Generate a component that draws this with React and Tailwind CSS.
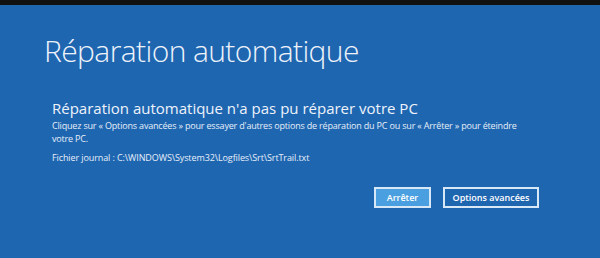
import React from 'react'

const App = () => {
  return (
    <div className="w-[600px] h-[258px] flex flex-col bg-[#1f66b1] overflow-hidden font-['Open_Sans',sans-serif] text-white">
      {/* top strip */}
      <div className="h-[5px] bg-[#111111] flex-shrink-0" />

      <div className="flex-1 flex flex-col">
        <h1 className="pl-[44px] pt-[26px] text-[30px] font-light leading-[40px] tracking-[-0.6px] text-[#eef3fa]">
          Réparation automatique
        </h1>

        <div className="pl-[52px] pt-[27px]">
          <h2 className="text-[15px] leading-[20px] text-[#eef3fa]">
            Réparation automatique n'a pas pu réparer votre PC
          </h2>
          <p className="mt-[1px] w-[480px] text-[9px] leading-[13px] tracking-[-0.18px] text-[#e6eef8]">
            Cliquez sur « Options avancées » pour essayer d'autres options de réparation du PC ou sur « Arrêter » pour éteindre votre PC.
          </p>
          <p className="mt-[6px] text-[9px] leading-[13px] tracking-[-0.1px] text-[#e6eef8]">
            Fichier journal : C:\WINDOWS\System32\Logfiles\Srt\SrtTrail.txt
          </p>
        </div>

        {/* actions */}
        <div className="flex justify-end gap-[12px] pr-[61px] pt-[23px]">
          <button className="w-[57px] h-[21px] border-2 border-[#d9e8f6] bg-[#4a9fe0] text-[9px] font-semibold text-white">
            Arrêter
          </button>
          <button className="w-[96px] h-[21px] border-2 border-[#d9e8f6] text-[9px] font-semibold text-white">
            Options avancées
          </button>
        </div>
      </div>
    </div>
  )
}

export default App
